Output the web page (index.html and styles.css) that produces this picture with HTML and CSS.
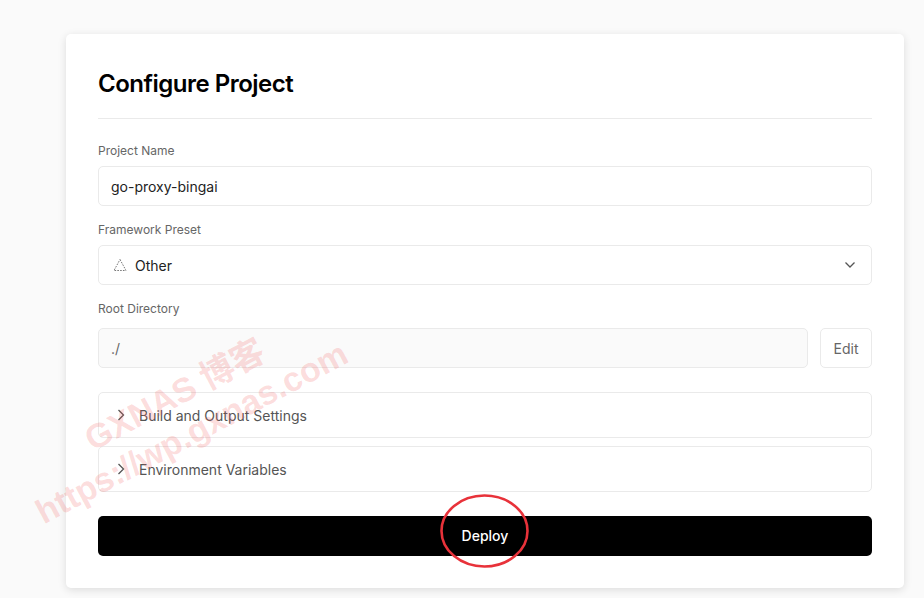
FILE: index.html
```html
<!DOCTYPE html>
<html lang="en">
<head>
<meta charset="utf-8">
<title>Configure Project</title>
<link rel="stylesheet" href="styles.css">
</head>
<body>
<main class="card">
  <h1 class="title">Configure Project</h1>
  <form class="form">
    <div class="field">
      <div class="label">Project Name</div>
      <div class="control">go-proxy-bingai</div>
    </div>
    <div class="field">
      <div class="label">Framework Preset</div>
      <div class="control select">
        <svg class="preset-icon" width="14" height="14" viewBox="0 0 14 14" fill="none" stroke="#777" stroke-width="1" stroke-dasharray="1.6 1.2"><path d="M7 1.5 13 12.5H1Z"/></svg>
        <span class="grow">Other</span>
        <svg class="chevron" width="12" height="8" viewBox="0 0 12 8" fill="none" stroke="#555" stroke-width="1.3"><path d="M1.5 1.5 6 6 10.5 1.5"/></svg>
      </div>
    </div>
    <div class="field">
      <div class="label">Root Directory</div>
      <div class="row">
        <div class="control disabled">./</div>
        <div class="edit">Edit</div>
      </div>
    </div>
    <div class="panels">
      <div class="panel">
        <svg width="8" height="14" viewBox="0 0 8 14" fill="none" stroke="#555" stroke-width="1.3"><path d="M1.5 2 6.5 7 1.5 12"/></svg>
        <span>Build and Output Settings</span>
      </div>
      <div class="panel">
        <svg width="8" height="14" viewBox="0 0 8 14" fill="none" stroke="#555" stroke-width="1.3"><path d="M1.5 2 6.5 7 1.5 12"/></svg>
        <span>Environment Variables</span>
      </div>
    </div>
    <div class="deploy">Deploy</div>
  </form>
</main>
<div class="mark mark-one">GXNAS 博客</div>
<div class="mark mark-two">https://wp.gxnas.com</div>
<svg class="circle" width="92" height="76" viewBox="0 0 92 76" fill="none" stroke="#e8323a" stroke-width="2.6"><ellipse cx="45.5" cy="37" rx="43" ry="35.5"/></svg>
</body>
</html>
```
FILE: styles.css
```css
* { box-sizing: border-box; }
html, body { margin: 0; height: 100%; }
body {
  background: #fafafa;
  font-family: Inter, "Noto Sans CJK SC", sans-serif;
  overflow: hidden;
  padding: 34px 20px 0 66px;
}
.card {
  background: #fff;
  height: 554px;
  border-radius: 5px;
  padding: 32px;
  box-shadow: 0 2px 8px rgba(0,0,0,.12);
}
.title {
  margin: 0;
  height: 53px;
  font-size: 24px;
  line-height: 36px;
  font-weight: 600;
  letter-spacing: -0.5px;
  color: #000;
  border-bottom: 1px solid #eaeaea;
}
.form { display: flex; flex-direction: column; }
.field { margin-top: 16px; }
.field:first-child { margin-top: 24px; }
.label {
  font-size: 12px;
  line-height: 16px;
  color: #666;
  margin-bottom: 7px;
}
.control {
  flex: 1;
  height: 40px;
  display: flex;
  align-items: center;
  padding: 0 12px;
  font-size: 14px;
  color: #222;
  border: 1px solid #eaeaea;
  border-radius: 5px;
}
.select { gap: 8px; }
.preset-icon { margin-left: 2px; }
.grow { flex: 1; }
.chevron { margin-right: 3px; }
.disabled { background: #fafafa; color: #666; }
.row { display: flex; gap: 12px; margin-top: 11px; }
.edit {
  width: 52px;
  height: 40px;
  display: flex;
  align-items: center;
  justify-content: center;
  font-size: 14px;
  color: #666;
  border: 1px solid #eaeaea;
  border-radius: 5px;
}
.panels { display: flex; flex-direction: column; gap: 8px; margin-top: 24px; }
.panel {
  height: 46px;
  display: flex;
  align-items: center;
  gap: 14px;
  padding-left: 18px;
  font-size: 14px;
  color: #555;
  border: 1px solid #eaeaea;
  border-radius: 5px;
}
.deploy {
  height: 40px;
  margin-top: 24px;
  padding-bottom: 1px;
  background: #000;
  color: #fff;
  border-radius: 5px;
  display: flex;
  align-items: center;
  justify-content: center;
  font-size: 14px;
  font-weight: 500;
}
.mark {
  position: absolute;
  white-space: nowrap;
  font-family: "Liberation Sans", "Noto Sans CJK SC", sans-serif;
  font-weight: 700;
  font-size: 34px;
  line-height: 1;
  color: rgba(240, 80, 80, .2);
  transform: rotate(-28deg);
  transform-origin: left bottom;
}
.mark-one { left: 95px; top: 422px; }
.mark-two { left: 46px; top: 495px; }
.circle { position: absolute; left: 439px; top: 494px; }
```
